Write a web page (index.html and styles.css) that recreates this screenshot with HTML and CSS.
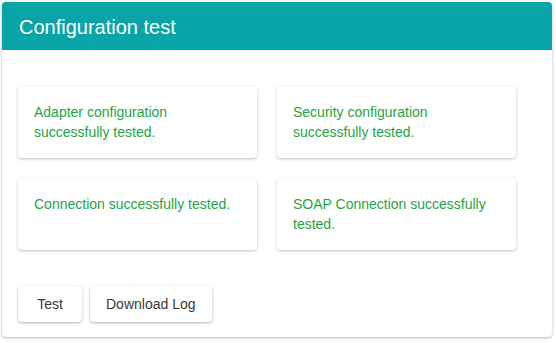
FILE: index.html
```html
<!DOCTYPE html>
<html lang="en">
<head>
  <meta charset="UTF-8" />
  <meta name="viewport" content="width=device-width, initial-scale=1" />
  <title>Configuration test</title>
  <link rel="stylesheet" href="styles.css">
</head>
<body>
  <div class="panel">
    <div class="panel-header">Configuration test</div>

    <div class="panel-body">
      <div class="results">
        <div class="result-card">Adapter configuration successfully tested.</div>
        <div class="result-card">Security configuration successfully tested.</div>
        <div class="result-card">Connection successfully tested.</div>
        <div class="result-card">SOAP Connection successfully tested.</div>
      </div>

      <div class="actions">
        <button class="btn">Test</button>
        <button class="btn">Download Log</button>
      </div>
    </div>
  </div>
</body>
</html>
```

FILE: styles.css
```css
body {
  margin: 0;
  padding: 2px 4px 6px 2px;
  font-family: "Liberation Sans", Arial, sans-serif;
  background: #fff;
}

.panel {
  width: 550px;
  background: #fff;
  border-radius: 4px;
  overflow: hidden;
  box-shadow: 0 1px 3px rgba(0,0,0,0.3);
}

.panel-header {
  height: 48px;
  box-sizing: border-box;
  padding: 13px 17px 0;
  background: #08a4a8;
  color: #fff;
  font-size: 20px;
  line-height: 24px;
}

.panel-body {
  padding: 36px 16px 15px;
}

.results {
  display: grid;
  grid-template-columns: 239px 239px;
  gap: 20px;
}

.result-card {
  height: 72px;
  box-sizing: border-box;
  padding: 16px 16px 0;
  background: #fff;
  border-radius: 4px;
  box-shadow: 0 1px 3px rgba(0,0,0,0.25);
  color: #1ea446;
  font-size: 14px;
  line-height: 20px;
}

.actions {
  display: flex;
  gap: 8px;
  margin-top: 36px;
}

.btn {
  height: 36px;
  min-width: 64px;
  padding: 0 16px;
  background: #fff;
  border: none;
  border-radius: 4px;
  box-shadow: 0 1px 3px rgba(0,0,0,0.3);
  font-family: "Liberation Sans", Arial, sans-serif;
  font-size: 14px;
  color: #3a3a3a;
  cursor: pointer;
}
```
